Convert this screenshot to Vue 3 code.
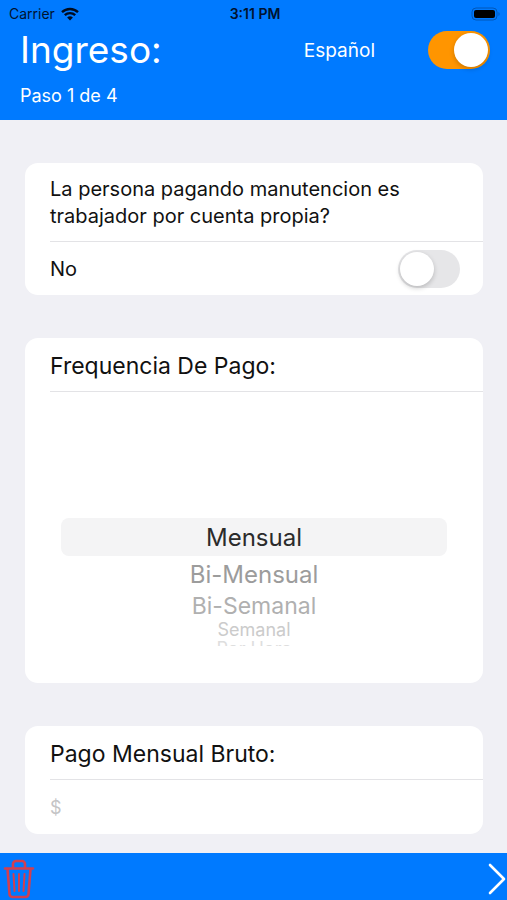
<script setup>
import { ref } from 'vue'

const spanish = ref(true)
const selfEmployed = ref(false)
const grossPay = ref('')
const frequency = ref('Mensual')

const frequencies = [
  { name: 'Mensual', row: 'row-selected' },
  { name: 'Bi-Mensual', row: 'row-near' },
  { name: 'Bi-Semanal', row: 'row-mid' },
  { name: 'Semanal', row: 'row-far' },
  { name: 'Por Hora', row: 'row-edge' }
]

function clearForm() {
  selfEmployed.value = false
  grossPay.value = ''
  frequency.value = 'Mensual'
}
</script>

<template>
  <div class="screen">
    <header class="header">
      <div class="status">
        <div class="carrier">
          <span>Carrier</span>
          <svg class="wifi" viewBox="0 0 18 14" aria-hidden="true">
            <path d="M1 5.2a11.6 11.6 0 0 1 16 0" />
            <path d="M3.8 8.2a7.6 7.6 0 0 1 10.4 0" />
            <path class="solid" d="M9 13.6 6.1 10.6a4.2 4.2 0 0 1 5.8 0z" />
          </svg>
        </div>
        <span class="time">3:11 PM</span>
        <svg class="battery" viewBox="0 0 30 14" aria-hidden="true">
          <rect class="shell" x="1" y="1" width="25" height="12" rx="4" />
          <rect x="3" y="3" width="21" height="8" rx="2" />
          <path class="cap" d="M27.5 5a2.4 2.4 0 0 1 0 4z" />
        </svg>
      </div>
      <div class="title-row">
        <h1>Ingreso:</h1>
        <label for="language">Español</label>
        <input id="language" v-model="spanish" class="switch" type="checkbox" role="switch">
      </div>
      <p class="step">Paso 1 de 4</p>
    </header>

    <main class="form">
      <section class="card">
        <p class="question">La persona pagando manutencion es trabajador por cuenta propia?</p>
        <div class="answer">
          <label for="self-employed">{{ selfEmployed ? 'Si' : 'No' }}</label>
          <input id="self-employed" v-model="selfEmployed" class="switch" type="checkbox" role="switch">
        </div>
      </section>

      <section class="card">
        <h2 id="frequency-title">Frequencia De Pago:</h2>
        <div class="picker" role="radiogroup" aria-labelledby="frequency-title">
          <label v-for="item in frequencies" :key="item.name" class="option" :class="item.row">
            <input v-model="frequency" type="radio" name="frequency" :value="item.name">
            <span>{{ item.name }}</span>
          </label>
        </div>
      </section>

      <section class="card">
        <h2><label for="gross">Pago Mensual Bruto:</label></h2>
        <input id="gross" v-model="grossPay" class="amount" type="text" inputmode="decimal" placeholder="$">
      </section>
    </main>

    <footer class="toolbar">
      <button type="button" aria-label="Borrar" @click="clearForm">
        <svg class="trash" viewBox="0 0 32 40" aria-hidden="true">
          <path d="M2 9.5h28M10 9V5a3 3 0 0 1 3-3h6a3 3 0 0 1 3 3v4" />
          <path d="M4.5 10l2 25a3 3 0 0 0 3 3h13a3 3 0 0 0 3-3l2-25" />
          <path class="bars" d="M10.500 15l1 17M16 15v17M21.500 15l-1 17" />
        </svg>
      </button>
      <button type="button" aria-label="Siguiente">
        <svg class="next" viewBox="0 0 18 32" aria-hidden="true">
          <path d="M2 2l14 14L2 30" />
        </svg>
      </button>
    </footer>
  </div>
</template>

<style>
body {
  margin: 0;
  background: #f0f0f5;
}
</style>

<style scoped>
.screen {
  display: flex;
  flex-direction: column;
  min-height: 100vh;
  background: #f0f0f5;
  color: #111;
  font-family: Inter, "Liberation Sans", sans-serif;
  font-size: 20px;
}
.screen * {
  box-sizing: border-box;
}
h1, h2, p {
  margin: 0;
  font-weight: 400;
}

.header {
  height: 120px;
  background: #007aff;
  color: #fff;
}
.status {
  display: grid;
  grid-template-columns: 1fr auto 1fr;
  align-items: center;
  height: 27px;
  padding: 0 6px 0 9px;
  color: #001330;
  font-size: 14px;
}
.carrier {
  display: flex;
  align-items: center;
  gap: 6px;
}
.wifi {
  width: 18px;
  height: 14px;
  fill: none;
  stroke: #000c20;
  stroke-width: 2.4;
}
.wifi .solid {
  fill: #000c20;
  stroke: none;
}
.time {
  font-weight: 600;
}
.battery {
  justify-self: end;
  width: 30px;
  height: 14px;
}
.battery .shell {
  fill: none;
  stroke: #0057b8;
}
.battery .cap {
  fill: #0057b8;
}
.title-row {
  display: flex;
  align-items: center;
  height: 46px;
  padding: 0 17px 0 20px;
}
h1 {
  flex: 1;
  font-size: 37px;
  line-height: 48px;
}
.title-row label {
  margin-right: 53px;
  font-size: 19px;
}
.step {
  padding-left: 20px;
  font-size: 18px;
  line-height: 46px;
}

.switch {
  flex: none;
  appearance: none;
  width: 62px;
  height: 38px;
  margin: 0;
  padding: 2px;
  border-radius: 19px;
  background: #e6e6e8;
}
.switch::before {
  content: "";
  display: block;
  width: 34px;
  height: 34px;
  border-radius: 50%;
  background: #fff;
  box-shadow: 0 2px 5px rgba(0, 0, 0, 0.2);
}
.switch:checked {
  background: #ff9500;
}
.switch:checked::before {
  margin-left: auto;
}

.form {
  flex: 1;
  display: flex;
  flex-direction: column;
  gap: 43px;
  padding: 43px 24px 19px 25px;
}
.card {
  padding-left: 25px;
  border-radius: 13px;
  background: #fff;
}
.question {
  padding: 13px 64px 11px 0;
  border-bottom: 1px solid #e3e3e6;
  line-height: 27px;
}
.answer {
  display: flex;
  align-items: center;
  justify-content: space-between;
  height: 53px;
  padding-right: 23px;
}
h2 {
  padding-top: 3px;
  border-bottom: 1px solid #e3e3e6;
  font-size: 23px;
  line-height: 50px;
}
.picker {
  height: 291px;
  padding: 126px 36px 0 11px;
}
.option {
  display: flex;
  align-items: center;
  justify-content: center;
  overflow: hidden;
  font-size: 24px;
}
.option input {
  appearance: none;
  width: 0;
  margin: 0;
}
.row-selected {
  height: 38px;
  border-radius: 8px;
  background: #f4f4f5;
  color: #2b2b2b;
}
.row-near {
  height: 36px;
  color: #9c9c9c;
}
.row-mid {
  height: 28px;
  color: #b0b0b0;
  font-size: 23px;
}
.row-far {
  height: 20px;
  color: #cbcbcb;
  font-size: 18px;
  line-height: 18px;
}
.row-edge {
  align-items: flex-start;
  height: 6px;
  color: #dedede;
  font-size: 18px;
  line-height: 18px;
}
.amount {
  display: block;
  width: 100%;
  height: 54px;
  padding: 0 25px 0 0;
  border: 0;
  border-radius: 13px;
  outline: 0;
  background: none;
  color: #111;
  font-family: inherit;
  font-size: 18px;
}
.amount::placeholder {
  color: #c4c4c6;
}

.toolbar {
  display: flex;
  align-items: center;
  justify-content: space-between;
  height: 47px;
  padding: 5px 1px 0 3px;
  background: #007aff;
}
.toolbar button {
  display: flex;
  padding: 0;
  border: 0;
  background: none;
}
.toolbar svg {
  fill: none;
  stroke-linecap: round;
  stroke-linejoin: round;
}
.trash {
  width: 32px;
  height: 40px;
  stroke: #d13f50;
  stroke-width: 2.6;
}
.trash .bars {
  stroke-width: 2;
}
.next {
  width: 18px;
  height: 32px;
  stroke: #fff;
  stroke-width: 2.6;
}
</style>
